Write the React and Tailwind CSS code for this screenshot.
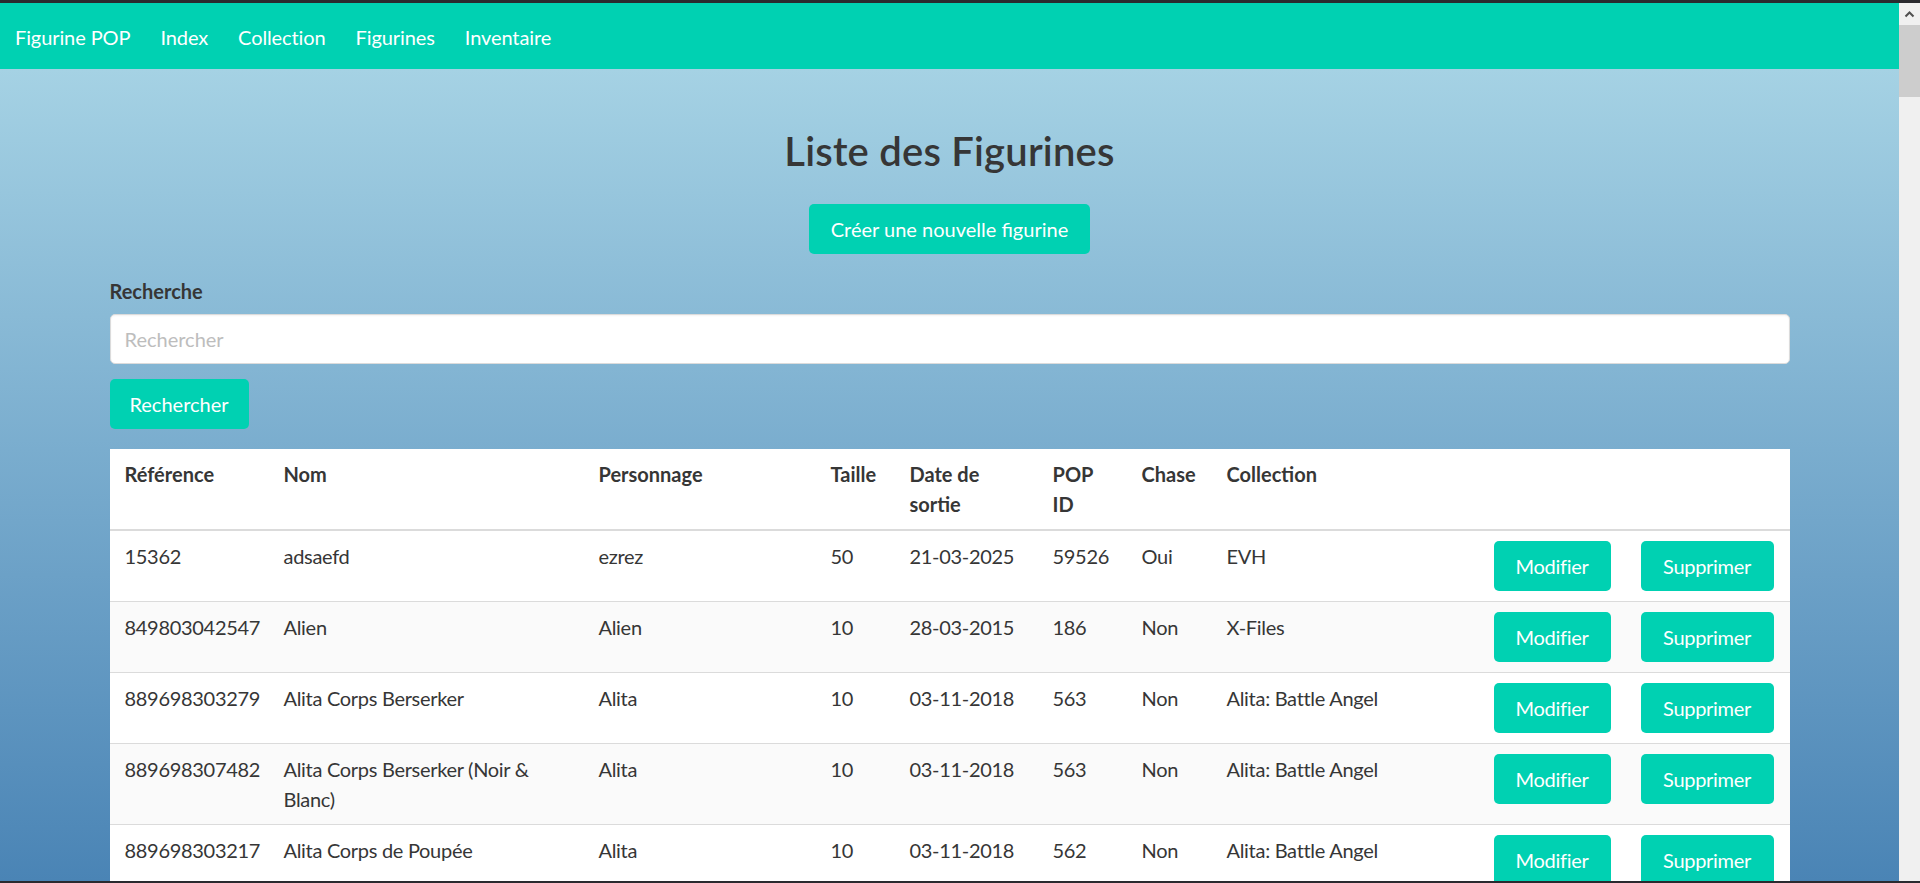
import React from 'react'

const navItems = ['Figurine POP', 'Index', 'Collection', 'Figurines', 'Inventaire']

const figurines = [
  { ref: '15362', nom: 'adsaefd', perso: 'ezrez', taille: '50', date: '21-03-2025', popId: '59526', chase: 'Oui', collection: 'EVH' },
  { ref: '849803042547', nom: 'Alien', perso: 'Alien', taille: '10', date: '28-03-2015', popId: '186', chase: 'Non', collection: 'X-Files' },
  { ref: '889698303279', nom: 'Alita Corps Berserker', perso: 'Alita', taille: '10', date: '03-11-2018', popId: '563', chase: 'Non', collection: 'Alita: Battle Angel' },
  { ref: '889698307482', nom: ['Alita Corps Berserker (Noir &', 'Blanc)'], perso: 'Alita', taille: '10', date: '03-11-2018', popId: '563', chase: 'Non', collection: 'Alita: Battle Angel' },
  { ref: '889698303217', nom: 'Alita Corps de Poupée', perso: 'Alita', taille: '10', date: '03-11-2018', popId: '562', chase: 'Non', collection: 'Alita: Battle Angel' }
]

const colWidths = ['w-[159px]', 'w-[315px]', 'w-[232px]', 'w-[79px]', 'w-[143px]', 'w-[89px]', 'w-[85px]', 'w-[267px]', 'w-[147px]', 'w-[164px]']

const PrimaryButton = ({ children, className = '' }) => (
  <button className={`inline-flex h-[50px] items-center justify-center rounded-[5px] bg-[#00d1b2] text-[20px] leading-[30px] text-white ${className}`}>
    {children}
  </button>
)

const Th = ({ children }) => (
  <th className="px-[15px] py-[10px] text-left align-top font-bold whitespace-nowrap text-[#363636] border-b-2 border-[#dbdbdb]">
    {children}
  </th>
)

const Td = ({ children }) => (
  <td className="px-[15px] py-[10px] align-top whitespace-nowrap tracking-[-0.3px] border-b border-[#dbdbdb]">
    {children}
  </td>
)

const App = () => {
  return (
    <div className="flex h-[883px] flex-col overflow-hidden bg-[#2a2a2f] font-['Lato',sans-serif] text-[20px] leading-[30px] text-[#363636]">
      <div className="h-[3px] shrink-0" />
      <div className="flex min-h-0 flex-1">
        <div className="flex min-w-0 flex-1 flex-col">
          {/* Navbar */}
          <nav className="flex h-[66px] shrink-0 items-center bg-[#00d1b2] pt-[2px]">
            {navItems.map(item => (
              <a key={item} className="px-[15px] py-[10px] tracking-[-0.1px] text-white">{item}</a>
            ))}
          </nav>

          {/* Page */}
          <main className="min-h-0 flex-1 overflow-hidden bg-linear-to-b from-[#a5d2e4] to-[#4a84b5]">
            <div className="mx-auto w-[1680px] pt-[60px]">
              <h1 className="text-center text-[40px] font-semibold leading-[45px] tracking-[0.2px] text-[#363636]">
                Liste des Figurines
              </h1>
              <div className="mt-[30px] flex justify-center">
                <PrimaryButton className="w-[281px]">Créer une nouvelle figurine</PrimaryButton>
              </div>

              <div className="mt-[22px]">
                <label className="block font-bold text-[#363636]">Recherche</label>
                <input
                  type="text"
                  placeholder="Rechercher"
                  className="mt-[8px] block h-[50px] w-full rounded-[5px] border border-[#dbdbdb] bg-white px-[14px] text-[20px] text-[#363636] shadow-[inset_0_1px_2px_rgba(10,10,10,0.05)] outline-none placeholder:text-[#bdbdbd]"
                />
                <PrimaryButton className="mt-[15px] w-[139px]">Rechercher</PrimaryButton>
              </div>

              <table className="mt-[20px] w-full table-fixed border-collapse bg-white">
                <colgroup>
                  {colWidths.map((w, i) => <col key={i} className={w} />)}
                </colgroup>
                <thead>
                  <tr>
                    <Th>Référence</Th>
                    <Th>Nom</Th>
                    <Th>Personnage</Th>
                    <Th>Taille</Th>
                    <Th>Date de<br />sortie</Th>
                    <Th>POP<br />ID</Th>
                    <Th>Chase</Th>
                    <Th>Collection</Th>
                    <Th></Th>
                    <Th></Th>
                  </tr>
                </thead>
                <tbody>
                  {figurines.map((f, i) => (
                    <tr key={f.ref} className={i % 2 === 1 ? 'bg-[#fafafa]' : ''}>
                      <Td>{f.ref}</Td>
                      <Td>{Array.isArray(f.nom) ? <>{f.nom[0]}<br />{f.nom[1]}</> : f.nom}</Td>
                      <Td>{f.perso}</Td>
                      <Td>{f.taille}</Td>
                      <Td>{f.date}</Td>
                      <Td>{f.popId}</Td>
                      <Td>{f.chase}</Td>
                      <Td>{f.collection}</Td>
                      <Td><PrimaryButton className="w-[117px]">Modifier</PrimaryButton></Td>
                      <Td><PrimaryButton className="w-[133px]">Supprimer</PrimaryButton></Td>
                    </tr>
                  ))}
                </tbody>
              </table>
            </div>
          </main>
        </div>

        {/* Scrollbar */}
        <div className="flex w-[21px] shrink-0 flex-col bg-[#f0f0f0]">
          <div className="flex h-[22px] items-center justify-center">
            <svg width="11" height="8" viewBox="0 0 11 8">
              <polyline points="1.5,6.5 5.5,2.5 9.5,6.5" fill="none" stroke="#505050" strokeWidth="2" />
            </svg>
          </div>
          <div className="h-[72px] bg-[#cdcdcd]" />
        </div>
      </div>
      <div className="h-[2px] shrink-0" />
    </div>
  )
}

export default App
